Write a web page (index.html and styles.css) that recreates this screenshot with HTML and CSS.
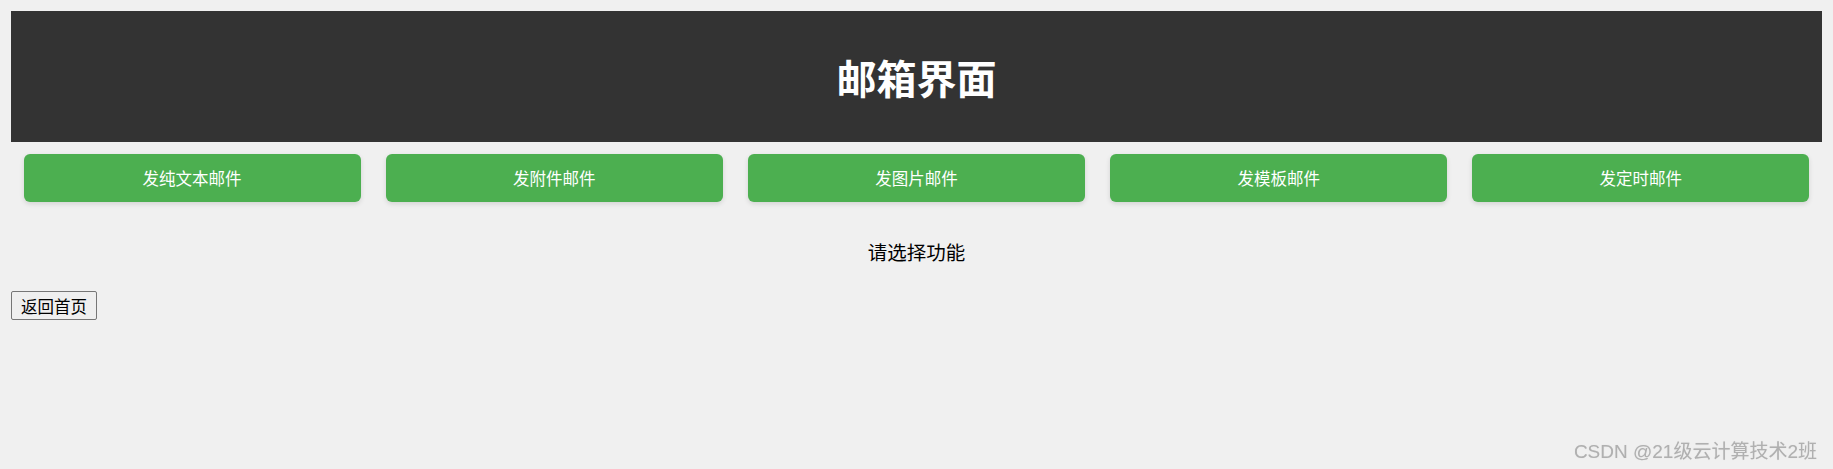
FILE: index.html
```html
<!DOCTYPE html>
<html lang="zh-CN">
<head>
  <meta charset="UTF-8" />
  <meta name="viewport" content="width=device-width, initial-scale=1" />
  <title>邮箱界面</title>
  <link rel="stylesheet" href="styles.css">
</head>
<body>
  <header class="top-bar">
    <h1>邮箱界面</h1>
  </header>

  <nav class="mail-buttons">
    <button>发纯文本邮件</button>
    <button>发附件邮件</button>
    <button>发图片邮件</button>
    <button>发模板邮件</button>
    <button>发定时邮件</button>
  </nav>

  <div id="content">请选择功能</div>

  <div class="back-button">
    <button>返回首页</button>
  </div>

  <div class="watermark">CSDN @21级云计算技术2班</div>
</body>
</html>
```

FILE: styles.css
```css
body {
  margin: 11px;
  font-family: "Liberation Sans", "Noto Sans CJK SC", sans-serif;
  background-color: #f0f0f0;
  color: #000;
}

.top-bar {
  background-color: #333;
  color: white;
  height: 131px;
  display: flex;
  justify-content: center;
  align-items: center;
}

.top-bar h1 {
  margin: 0;
  font-size: 40px;
  font-weight: bold;
}

.mail-buttons {
  display: flex;
  justify-content: space-around;
  margin-top: 12px;
}

.mail-buttons button {
  width: 337px;
  height: 48px;
  background-color: #4CAF50;
  color: white;
  border: none;
  border-radius: 6px;
  font-family: inherit;
  font-size: 16.5px;
  box-shadow: 0 2px 5px rgba(0, 0, 0, 0.12);
  cursor: pointer;
}

#content {
  margin-top: 38px;
  line-height: 26px;
  font-size: 19.5px;
  text-align: center;
}

.back-button {
  margin-top: 25px;
}

.back-button button {
  height: 29px;
  width: 86px;
  padding: 0;
  font-family: inherit;
  font-size: 16.5px;
  color: #000;
  background-color: #efefef;
  border: 1px solid #767676;
  border-radius: 2px;
}

.watermark {
  position: fixed;
  right: 16px;
  bottom: 6px;
  font-size: 19px;
  color: #b0b0b0;
  text-shadow: 0 0 1px #d8d8d8;
}
```
